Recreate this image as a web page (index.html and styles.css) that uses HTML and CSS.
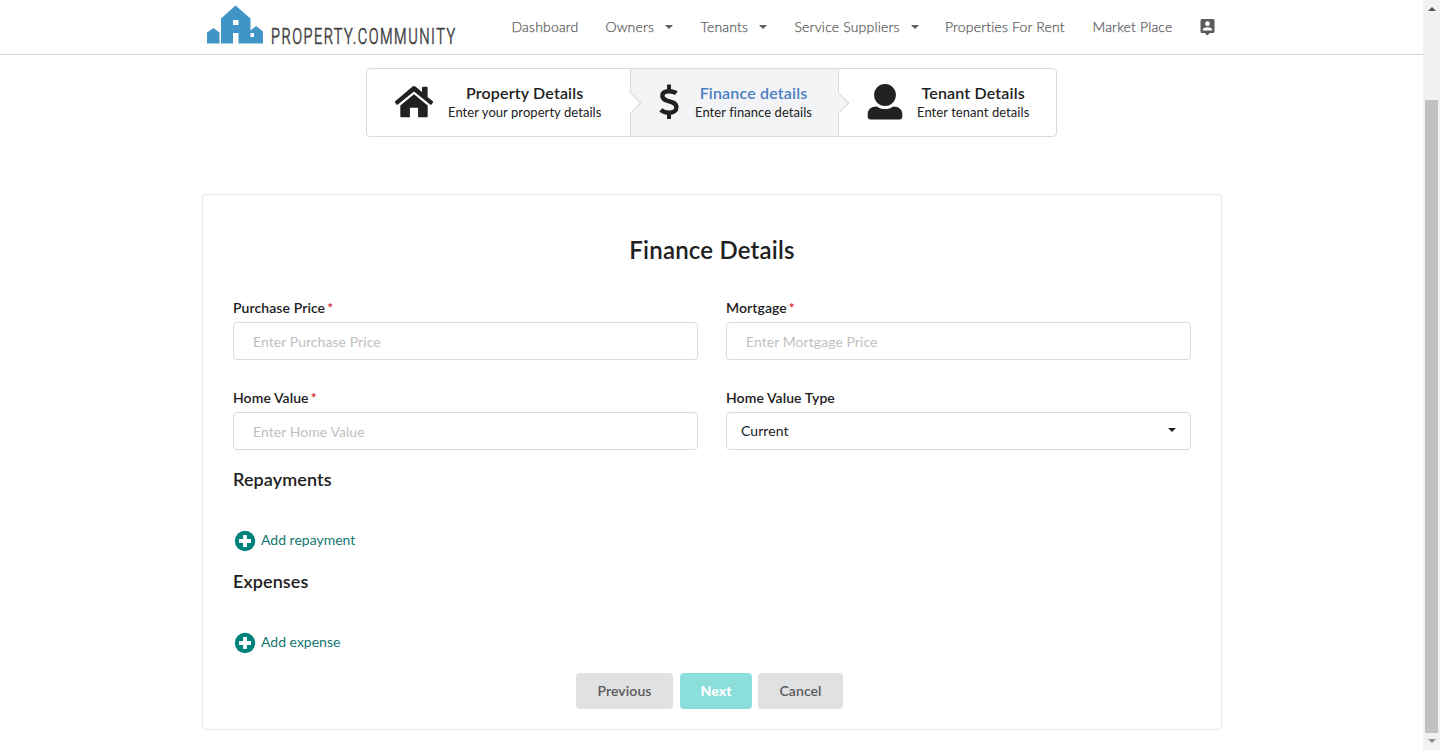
FILE: index.html
```html
<!DOCTYPE html>
<html lang="en">
<head>
<meta charset="utf-8">
<title>Property Community</title>
<link rel="stylesheet" href="styles.css">
</head>
<body>
<div class="page">
  <header class="topbar">
    <a class="brand">
      <svg class="brand-logo" width="270" height="52" viewBox="0 0 270 52">
        <path fill="#4095c6" fill-rule="evenodd" d="M0 43.500V32.500L6.500 28l6 4.500v11zM14 43.500V18.500L28.500 5.500 43.500 18.500V30.500L49 26l7 5.500v12H31.500V33h-5.500v10.500zM26 20v5h5.500v-5zM43.500 33v4H47v-4z"/>
        <text class="brand-text" transform="translate(64 43.600) scale(.66 1)" textLength="279" lengthAdjust="spacing">PROPERTY.COMMUNITY</text>
      </svg>
    </a>
    <nav class="menu">
      <a>Dashboard</a>
      <a>Owners<i class="caret"></i></a>
      <a>Tenants<i class="caret"></i></a>
      <a>Service Suppliers<i class="caret"></i></a>
      <a>Properties For Rent</a>
      <a>Market Place</a>
      <a class="account"><svg width="16" height="17" viewBox="0 0 16 17"><path fill="#5b5b5b" fill-rule="evenodd" d="M2 0h11q1.500 0 1.500 1.500v11q0 1.500-1.500 1.500H9.800L7.300 16.500 4.800 14H2Q.5 14 .5 12.500v-11Q.5 0 2 0zM7.500 2.300a2.400 2.400 0 1 0 0 4.800 2.400 2.400 0 0 0 0-4.800zM2.800 11.500h9.400v-.8c0-1.600-3.100-2.400-4.700-2.400s-4.700.8-4.700 2.400z"/></svg></a>
    </nav>
  </header>

  <section class="steps">
    <div class="step step-property">
      <svg width="40" height="34" viewBox="0 0 40 34"><path fill="#212121" d="M18.600 1.600q1.400-1.100 2.800 0l6.600 5.500V2.500q0-.8.800-.8h4q.8 0 .8.800v9.400l5.200 4.300q.8.700.2 1.400l-1.500 1.800q-.6.700-1.400.1L20 6.400 3.900 19.500q-.8.600-1.400-.1L1 17.600q-.6-.7.200-1.400z"/><path fill="#212121" d="M20 9.200l13.700 11.200v10.800q0 1-1 1h-8.600V22.700h-8.200v9.500H7.300q-1 0-1-1V20.400z"/></svg>
      <div class="step-text"><b>Property Details</b><span>Enter your property details</span></div>
    </div>
    <div class="step step-finance active">
      <svg width="20" height="36" viewBox="0 0 20 36"><path fill="none" stroke="#212121" stroke-width="4.400" d="M17.300 9.300C15.500 7.800 13 7.200 10 7.200c-4 0-6.600 1.600-6.600 4.600 0 7.400 14 3.600 14 11.400 0 3.400-3 5.400-7.200 5.400-3.400 0-6.400-1-8.400-2.800"/><path fill="#212121" d="M8 1q0-.6.600-.6h2.800q.6 0 .6.600v6H8zM8 28h4v6.500q0 .6-.6.600H8.600q-.6 0-.6-.6z"/></svg>
      <div class="step-text"><b>Finance details</b><span>Enter finance details</span></div>
    </div>
    <div class="step step-tenant">
      <svg width="36" height="36" viewBox="0 0 36 36"><circle cx="18" cy="11" r="10.900" fill="#212121"/><path fill="#212121" d="M9.500 22.400c5 3.400 12 3.400 17 0 5.500.2 8.800 3 8.800 7.600v2.500q0 3-3 3H3.700q-3 0-3-3V30c0-4.600 3.300-7.400 8.800-7.600z"/></svg>
      <div class="step-text"><b>Tenant Details</b><span>Enter tenant details</span></div>
    </div>
  </section>

  <main class="card">
    <h2>Finance Details</h2>
    <form class="fields">
      <div class="field"><label>Purchase Price<em>*</em></label><input type="text" placeholder="Enter Purchase Price"></div>
      <div class="field"><label>Mortgage<em>*</em></label><input type="text" placeholder="Enter Mortgage Price"></div>
      <div class="field"><label>Home Value<em>*</em></label><input type="text" placeholder="Enter Home Value"></div>
      <div class="field"><label>Home Value Type</label><div class="select">Current<i class="caret"></i></div></div>
    </form>
    <h3>Repayments</h3>
    <a class="add"><svg width="22" height="22" viewBox="0 0 22 22"><circle cx="11" cy="11" r="10.200" fill="#00827c"/><path stroke="#fff" stroke-width="3.800" d="M11 5v12M5 11h12"/></svg><span>Add repayment</span></a>
    <h3 class="expenses">Expenses</h3>
    <a class="add"><svg width="22" height="22" viewBox="0 0 22 22"><circle cx="11" cy="11" r="10.200" fill="#00827c"/><path stroke="#fff" stroke-width="3.800" d="M11 5v12M5 11h12"/></svg><span>Add expense</span></a>
    <div class="actions">
      <button class="btn btn-prev">Previous</button>
      <button class="btn btn-next">Next</button>
      <button class="btn btn-cancel">Cancel</button>
    </div>
  </main>
</div>
<aside class="scrollbar"><i class="up"></i><div class="thumb"></div><i class="down"></i></aside>
</body>
</html>
```
FILE: styles.css
```css
* { box-sizing: border-box; }
body {
  margin: 0;
  height: 750px;
  display: flex;
  overflow: hidden;
  background: #fff;
  color: #212121;
  font: 14px/20px Lato, sans-serif;
}
.page { width: 1423px; height: 750px; }

.topbar {
  height: 55px;
  padding-left: 207px;
  display: flex;
  border-bottom: 1px solid #d4d4d5;
}
.brand { width: 304.500px; }
.brand-logo { display: block; }
.brand-text { font: 300 22px Roboto, sans-serif; fill: #444; stroke: #444; stroke-width: .7px; }
.menu {
  display: grid;
  grid-template-columns: 94px 95px 94px 150.500px 147.500px 107.500px 20px;
  align-items: center;
  color: #5c5c5c;
  white-space: nowrap;
}
.menu a { display: flex; align-items: center; font-weight: 300; letter-spacing: .17px; -webkit-text-stroke: .25px #5c5c5c; }
.menu .caret { margin-left: 11px; }
.caret {
  width: 0;
  height: 0;
  border: 4px solid transparent;
  border-top-color: currentColor;
  border-bottom: 0;
}

.steps {
  width: 691px;
  height: 69px;
  margin: 13px 0 0 366px;
  display: grid;
  grid-template-columns: 263px 208px 1fr;
  border: 1px solid #d9dadb;
  border-radius: 4px;
}
.step { position: relative; display: flex; align-items: center; padding: 0 0 2px 27px; }
.step svg { flex: none; }
.step + .step { border-left: 1px solid #d9dadb; padding-left: 28px; }
.step:not(:last-child)::after {
  content: "";
  position: absolute;
  right: -8px;
  top: 26px;
  width: 15px;
  height: 15px;
  background: #fff;
  border: 1px solid #d9dadb;
  border-width: 1px 1px 0 0;
  transform: rotate(45deg);
  z-index: 1;
}
.step.active, .step.active::after { background: #f3f4f5; }
.step-text { display: flex; flex-direction: column; align-items: center; white-space: nowrap; }
.step-text b { font-size: 16px; line-height: 20px; font-weight: 600; letter-spacing: .17px; }
.step-text span { font-size: 13px; line-height: 18px; letter-spacing: .06px; }
.active b { color: #4b7fc4; }
.step-property .step-text { margin-left: 14px; }
.step-finance .step-text { margin-left: 16px; }
.step-tenant .step-text { margin-left: 14px; }

.card {
  width: 1020px;
  height: 536px;
  margin: 57px 0 0 202px;
  padding: 39px 30px 0;
  border: 1px solid #e7e8e9;
  border-radius: 3px;
}
h2 { margin: 0; font-size: 24px; line-height: 32px; font-weight: 600; text-align: center; letter-spacing: .2px; }
.fields {
  margin-top: 32px;
  display: grid;
  grid-template-columns: 465px 465px;
  gap: 28px;
}
.field label { display: block; height: 24px; line-height: 20px; font-weight: 600; letter-spacing: .08px; }
.field em { color: #db2828; font-style: normal; margin-left: 2px; }
.field input, .select {
  width: 100%;
  height: 38px;
  border: 1px solid #d9dadb;
  border-radius: 4px;
  background: #fff;
  display: block;
  font: 14px Lato, sans-serif;
  letter-spacing: .06px;
}
.field input { padding: 0 19px; }
.field input::placeholder { color: #bfbfbf; }
.select { display: flex; align-items: center; justify-content: space-between; padding: 0 14px 2px; }
h3 { margin: 17px 0 0; height: 24px; font-size: 18px; line-height: 24px; font-weight: 600; letter-spacing: .1px; }
.add { height: 22px; margin-top: 39px; padding-left: 1px; display: flex; align-items: center; gap: 5px; color: #137770; }
.add span { padding-bottom: 2px; }
.expenses { margin-top: 17px; }
.actions { display: flex; margin: 19px 0 0 343px; }
.btn {
  height: 36px;
  padding: 0 0 1px;
  border: 0;
  border-radius: 4px;
  background: #e0e1e2;
  color: #5a5a5a;
  font: 600 14px Lato, sans-serif;
  letter-spacing: .1px;
}
.btn-prev { width: 97px; }
.btn-next { width: 72px; margin: 0 6px 0 7px; background: #8bdeda; color: #fff; font-weight: 900; }
.btn-cancel { width: 85px; }

.scrollbar {
  width: 17px;
  height: 750px;
  background: #f1f1f1;
  display: flex;
  flex-direction: column;
  align-items: center;
}
.up, .down { width: 0; height: 0; border: 4px solid transparent; }
.up { margin-top: 7px; border-top: 0; border-bottom-color: #505050; }
.down { margin-top: 6px; border-bottom: 0; border-top-color: #8b8b8b; }
.thumb { width: 13px; height: 633px; margin-top: 89px; background: #c1c1c1; }
```
